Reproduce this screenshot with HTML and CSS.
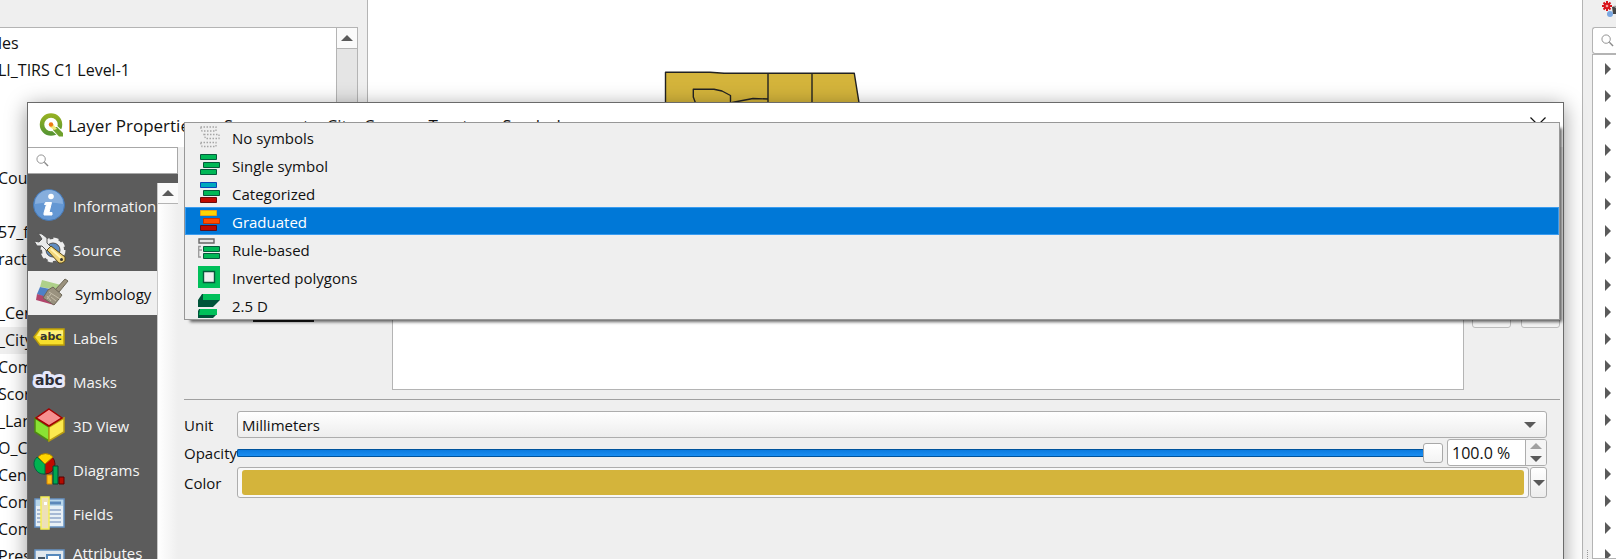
FILE: index.html
```html
<!DOCTYPE html>
<html lang="en">
<head>
<meta charset="utf-8">
<title>Layer Properties</title>
<link rel="stylesheet" href="styles.css">
</head>
<body>
<div class="app">
  <aside class="browser-dock" aria-label="Browser">
    <div class="tree">
      <ul class="tree-rows">
        <li>les</li><li>LI_TIRS C1 Level-1</li><li></li><li></li><li></li><li>Coun</li><li></li><li>57_f</li><li>ract</li><li></li><li>_Cen</li><li class="current">_City</li><li>Com</li><li>Scor</li><li>_Lan</li><li>O_C</li><li>Cens</li><li>Com</li><li>Com</li><li>Pres</li>
      </ul>
      <div class="scroll"><button class="scroll-up" aria-label="Scroll up"><span class="tri up"></span></button></div>
    </div>
  </aside>

  <main class="canvas">
    <svg class="map" width="200" height="40" viewBox="664 70 200 40">
      <g stroke="#222" stroke-width="1.4" stroke-linejoin="round">
        <path fill="#d4b43b" d="M665.500 112V72.300H710L724 73.300H854.300L860.500 112Z"/>
        <path fill="none" d="M768 73.300V112M812 73.300V112M695.500 103L693.300 97V89.300H714L722 91L730.500 95.500V103M732 102.500L753 98.500L768 99"/>
      </g>
    </svg>
  </main>

  <div class="splitter"><span class="grip"></span></div>

  <aside class="tool-dock" aria-label="Processing toolbox">
    <div class="dock-tools">
      <svg width="20" height="18" viewBox="0 0 20 18">
        <path d="M11 7L20 4V14H12Z" fill="#444"/><path d="M13 6L20 11" stroke="#aaa" stroke-width="1.500"/>
        <circle cx="9" cy="14" r="3" fill="#7aa7e0"/>
        <g stroke="#d8141b" stroke-width="2"><path d="M6 1V11M1 6H11M2.500 2.500L9.500 9.500M9.500 2.500L2.500 9.500"/></g>
        <circle cx="6" cy="6" r="3.300" fill="#d8141b"/><circle cx="6" cy="6" r="1.300" fill="#f6a3a3"/>
      </svg>
    </div>
    <label class="dock-search">
      <svg width="13" height="13" viewBox="0 0 14 14"><circle cx="5.500" cy="5.500" r="4.500" fill="none" stroke="#8a8a8a"/><path d="M9 9L13 13" stroke="#8a8a8a" stroke-width="1.500"/></svg>
      <input type="text" aria-label="Search toolbox">
    </label>
    <ul class="tool-tree">
      <li><span class="tri right"></span></li><li><span class="tri right"></span></li><li><span class="tri right"></span></li><li><span class="tri right"></span></li><li><span class="tri right"></span></li><li><span class="tri right"></span></li><li><span class="tri right"></span></li><li><span class="tri right"></span></li><li><span class="tri right"></span></li><li><span class="tri right"></span></li><li><span class="tri right"></span></li><li><span class="tri right"></span></li><li><span class="tri right"></span></li><li><span class="tri right"></span></li><li><span class="tri right"></span></li><li><span class="tri right"></span></li><li><span class="tri right"></span></li><li><span class="tri right"></span></li><li><span class="tri right"></span></li>
    </ul>
  </aside>

  <section class="dialog" role="dialog" aria-labelledby="dlg-title">
    <header class="titlebar">
      <svg class="logo" width="24" height="24" viewBox="0 0 24 24">
        <defs><linearGradient id="q" x1="0" y1="0" x2="0" y2="1"><stop offset="0" stop-color="#93b023"/><stop offset="1" stop-color="#589632"/></linearGradient></defs>
        <circle cx="12" cy="11.500" r="9" fill="none" stroke="url(#q)" stroke-width="4.500"/>
        <path d="M12 13L16 11L24 18V24H20L12 17Z" fill="#fff"/>
        <path d="M15 14H18L24 20V23.500H20L14 17Z" fill="#6fa02c"/>
        <path d="M11 11L14 11L18 16L15 17L11 14Z" fill="#f4ea7a"/><circle cx="12" cy="11.500" r="2.200" fill="#ee7913"/>
      </svg>
      <h1 id="dlg-title">Layer Properties — Sacramento_City_Census_Tracts — Symbology</h1>
      <button class="close" aria-label="Close"><svg width="16" height="16" viewBox="0 0 16 16"><path d="M.5.500L15.500 15.500M15.500.500L.5 15.500" stroke="#111" stroke-width="1.200"/></svg></button>
    </header>

    <div class="dialog-body">
      <div class="side">
        <label class="side-search">
          <svg width="13" height="13" viewBox="0 0 14 14"><circle cx="5.500" cy="5.500" r="4.500" fill="none" stroke="#8a8a8a"/><path d="M9 9L13 13" stroke="#8a8a8a" stroke-width="1.500"/></svg>
          <input type="text" aria-label="Search options">
        </label>
        <div class="side-main">
          <nav class="pages">
            <a href="#information">
              <svg width="34" height="34" viewBox="0 0 34 34"><circle cx="16" cy="17" r="15.500" fill="#6497d3" stroke="#4678b4"/><path d="M2 16A14 14 0 0 1 30 16Q16 13 2 16Z" fill="#86aedd"/><circle cx="18" cy="8.500" r="2.800" fill="#fff"/><path d="M12.500 14.500H18.500L16 24.500H19V27H11V25L13.500 16.500H11.500Z" fill="#fff" stroke="#fff"/></svg>
              <span>Information</span></a>
            <a href="#source">
              <svg width="34" height="34" viewBox="0 0 34 34"><circle cx="20" cy="18" r="9" fill="none" stroke="#eee" stroke-width="4"/><circle cx="20" cy="18" r="11" fill="none" stroke="#eee" stroke-width="3" stroke-dasharray="5 3.640"/><circle cx="20" cy="18" r="7" fill="#5f8cc0" stroke="#555"/><path d="M5 1L9 2L14 6V11L18 15L14 19L9 14H4L1 9L6 10L9 7Z" fill="#e9eaea" stroke="#555"/><path d="M14 18L18 14L32 25V29L29 31H26Z" fill="#f2d67a" stroke="#5b4a18"/><path d="M18 17L28 26" stroke="#fff3b5" stroke-width="2"/><circle cx="28.500" cy="27.500" r="1.500" fill="#333"/></svg>
              <span>Source</span></a>
            <a href="#symbology" class="active" aria-current="page">
              <svg width="36" height="34" viewBox="0 0 36 34"><path d="M9 4L28 9L25 14L7 11Z" fill="#aed08a"/><path d="M7 11L17 13L14 22L4 18Z" fill="#4f80c5"/><path d="M4 18L14 21L21 29L3 24Z" fill="#b2456c"/><path d="M22 14L32 3L35 5L26 16Z" fill="#9b927d" stroke="#6d6757"/><path d="M15 14L20 11L29 19L26 23L21 29L10 22Z" fill="#9a927f" stroke="#6d6757"/><path d="M16 16L27 23M14 20L18 25M18 21L23 25M14 23L18 18" stroke="#c5bda9"/></svg>
              <span>Symbology</span></a>
            <a href="#labels">
              <svg width="34" height="34" viewBox="0 0 34 34"><path d="M1 17L7 9H31V25H7Z" fill="#f7e02c" stroke="#bfa009" stroke-width="1.500"/><path d="M7 10.500H30V16H4Z" fill="#fff07a"/><text x="7" y="20" class="abc-small">abc</text></svg>
              <span>Labels</span></a>
            <a href="#masks">
              <svg width="34" height="34" viewBox="0 0 34 34"><text x="2" y="21" class="abc-halo">abc</text></svg>
              <span>Masks</span></a>
            <a href="#view3d">
              <svg width="34" height="34" viewBox="0 0 34 34"><path d="M2 10L16 19V33L2 24Z" fill="#8ae234" stroke="#4e8a12" stroke-width="1.500"/><path d="M31 10L16 19V33L31 24Z" fill="#fce94f" stroke="#b79a12" stroke-width="1.500"/><path d="M16 1L29 10L16 18L3 10Z" fill="#f78f8f" stroke="#a40000" stroke-width="1.500"/></svg>
              <span>3D View</span></a>
            <a href="#diagrams">
              <svg width="34" height="34" viewBox="0 0 34 34"><circle cx="12" cy="12" r="10" fill="#c00a00" stroke="#5b1010"/><path d="M12 12L4 5A10 10 0 0 0 12 22Z" fill="#00b350" stroke="#064"/><path d="M12 12L5 5A10 10 0 0 1 20 5Z" fill="#ffd500" stroke="#a68000"/><path d="M14 23H19V32H14Z" fill="#ffc21c" stroke="#d98500"/><path d="M20 14H25V32H20Z" fill="#00a650" stroke="#043"/><path d="M26 25H31V32H26Z" fill="#b50b00" stroke="#5b0000"/></svg>
              <span>Diagrams</span></a>
            <a href="#fields">
              <svg width="34" height="34" viewBox="0 0 34 34"><path d="M2 3H31V31H2Z" fill="#e8f0f6" stroke="#6592c4" stroke-width="1.500"/><path d="M3 4H30V10H3Z" fill="#b8d6ea"/><path d="M17 7H28" stroke="#5c88ba" stroke-width="3"/><path d="M4 14H28M4 18H28M4 22H28M4 26H28" stroke="#6582b4"/><path d="M8 1H16V33H8Z" fill="#ede0b8" stroke="#f5ee54" stroke-width="1.500"/><path d="M11 6H14V9H11Z" fill="#fff"/></svg>
              <span>Fields</span></a>
            <a href="#form" class="two-line">
              <svg width="34" height="34" viewBox="0 0 34 34"><path d="M2 3H31V31H2Z" fill="#e1e8ee" stroke="#6592c4" stroke-width="1.500"/><path d="M5 10H12V13H5Z" fill="#456"/><path d="M14 8H27V18H14Z" fill="#fff" stroke="#5689bd" stroke-width="2"/></svg>
              <span>Attributes Form</span></a>
          </nav>
          <div class="side-scroll"><button class="scroll-up" aria-label="Scroll pages up"><span class="tri up"></span></button></div>
        </div>
      </div>

      <div class="content">
        <div class="symbol-area">
          <div class="preview-cell"><div class="preview"></div></div>
          <div class="symbol-list"></div>
          <div class="symbol-buttons"><button aria-label="Add symbol layer"></button><button aria-label="Remove symbol layer"></button></div>
        </div>
        <form class="form">
          <label for="unit">Unit</label>
          <div class="select-wrap"><select id="unit"><option>Millimeters</option></select><span class="tri down"></span></div>
          <label for="opacity">Opacity</label>
          <div class="opacity-row">
            <input id="opacity" type="range" min="0" max="100" value="100">
            <div class="spin"><input type="text" value="100.0 %" aria-label="Opacity value"><div class="steps"><button type="button" aria-label="Increase" disabled><span class="tri up"></span></button><button type="button" aria-label="Decrease"><span class="tri down"></span></button></div></div>
          </div>
          <label for="color">Color</label>
          <div class="color-row"><button type="button" id="color" class="color"><span></span></button><button type="button" class="color-menu" aria-label="Color menu"><span class="tri down"></span></button></div>
        </form>
      </div>
    </div>

    <ul class="menu" role="listbox" aria-label="Renderer">
      <li role="option"><svg width="22" height="22" viewBox="0 0 22 22"><g fill="none" stroke="#a5a5a5" stroke-width="1.300" stroke-dasharray="1.500 1.500"><path d="M2.500 1H18V5H4ZM6 8.500H21V12.500H7.500ZM2.500 16.500H18V20.500H4Z"/></g></svg>No symbols</li>
      <li role="option"><svg width="22" height="22" viewBox="0 0 22 22"><g fill="#00b856" stroke="#065a3b"><path d="M2.500.500H18.500V5.500H2.500ZM5.500 8.500H21.500V13.500H5.500ZM2.500 15.500H18.500V20.500H2.500Z"/></g></svg>Single symbol</li>
      <li role="option"><svg width="22" height="22" viewBox="0 0 22 22"><path d="M2.500.500H18.500V5.500H2.500Z" fill="#00a9bd" stroke="#0b46b8"/><path d="M5.500 8.500H21.500V13.500H5.500Z" fill="#00b856" stroke="#065a3b"/><path d="M2.500 15.500H18.500V20.500H2.500Z" fill="#c00a00" stroke="#6b0d0d"/></svg>Categorized</li>
      <li role="option" aria-selected="true" class="selected"><svg width="22" height="22" viewBox="0 0 22 22"><path d="M2.500.500H18.500V5.500H2.500Z" fill="#ffd500" stroke="#e8a21a"/><path d="M5.500 8.500H21.500V13.500H5.500Z" fill="#ff4e00" stroke="#c83200"/><path d="M2.500 15.500H18.500V20.500H2.500Z" fill="#c00a00" stroke="#5c0d1c"/></svg>Graduated</li>
      <li role="option"><svg width="22" height="22" viewBox="0 0 22 22"><path d="M1 1H16V5H1Z" fill="#e6e6e6" stroke="#666" stroke-width="1.400"/><path d="M3 8.500H.7V19H3M1 12H4" fill="none" stroke="#999" stroke-width="1.300"/><path d="M5.500 8.500H21.500V13.500H5.500ZM5.500 15.500H21.500V20.500H5.500Z" fill="#00b856" stroke="#065a3b"/></svg>Rule-based</li>
      <li role="option"><svg width="22" height="22" viewBox="0 0 22 22"><path d="M0 0H22V22H0Z" fill="#00c05a"/><path d="M5.500 5.500H16.500V16.500H5.500Z" fill="#efefef" stroke="#065a3b" stroke-width="1.400"/></svg>Inverted polygons</li>
      <li role="option"><svg width="22" height="24" viewBox="0 0 22 24"><path d="M4 0L0 6V13H15L22 6V0Z" fill="#00543a"/><path d="M5 0H22V6H5Z" fill="#00c05a"/><path d="M1 15L0 17V24H15L19 20V15Z" fill="#00543a"/><path d="M2 15H19V21H1Z" fill="#00c05a"/></svg>2.5 D</li>
    </ul>
  </section>
</div>
</body>
</html>
```
FILE: styles.css
```css
* { box-sizing: border-box; }
body {
  margin: 0;
  font-family: "Open Sans", "Noto Sans", sans-serif;
  font-size: 15px;
  color: #111;
}
ul { list-style: none; margin: 0; padding: 0; }
button { padding: 0; border: 0; background: none; font: inherit; }
input, select { font: inherit; color: inherit; }
svg { display: block; flex: none; }

.app {
  position: relative;
  display: flex;
  height: 100vh;
  overflow: hidden;
  background: #efefef;
}

/* small arrow glyphs */
.tri { display: block; width: 0; height: 0; border: 6px solid transparent; }
.tri.up { border-bottom-color: #5a5a5a; border-top-width: 0; }
.tri.down { border-top-color: #5a5a5a; border-bottom-width: 0; }
.tri.right { border-left-color: #5a5a5a; border-right-width: 0; }

/* left dock */
.browser-dock {
  flex: 0 0 368px;
  padding: 27px 9px 0 0;
  border-right: 1px solid #b4b4b4;
}
.tree {
  display: flex;
  height: 100%;
  border: 1px solid #b4b4b4;
  border-width: 1px 1px 0 0;
  background: #fff;
  overflow: hidden;
}
.tree-rows { flex: 1; padding-top: 2px; font-size: 16px; }
.tree-rows li { height: 27px; line-height: 27px; text-indent: -2px; white-space: nowrap; }
.tree-rows .current { background: #efefef; }
.scroll { flex: 0 0 21px; border-left: 1px solid #b4b4b4; background: #e5e5e5; }
.scroll-up {
  display: flex;
  align-items: center;
  justify-content: center;
  width: 100%;
  height: 21px;
  border-bottom: 1px solid #b4b4b4;
  background: #fafafa;
}

/* map */
.canvas { position: relative; flex: 1; background: #fff; overflow: hidden; }
.map { position: absolute; left: 296px; top: 70px; }

.splitter {
  display: flex;
  flex: 0 0 10px;
  align-items: flex-end;
  justify-content: center;
  border-left: 1px solid #b4b4b4;
}
.grip { display: block; width: 1px; height: 9px; border-left: 1px dotted #999; }

/* right dock */
.tool-dock { display: flex; flex-direction: column; flex: 0 0 24px; overflow: hidden; }
.dock-tools { flex: 0 0 27px; padding-left: 9px; }
.dock-search {
  display: flex;
  align-items: center;
  flex: 0 0 27px;
  padding-left: 8px;
  border: 1px solid #b4b4b4;
  border-right: 0;
  border-radius: 3px 0 0 3px;
  background: #fff;
}
.dock-search input { width: 0; flex: 1; border: 0; padding: 0; }
.tool-tree { flex: 1; border: 1px solid #b4b4b4; border-right: 0; background: #fff; overflow: hidden; }
.tool-tree li { display: flex; align-items: center; height: 27px; padding-left: 12px; }

/* dialog window */
.dialog {
  position: absolute;
  left: 27px;
  right: 52px;
  top: 102px;
  bottom: -20px;
  display: flex;
  flex-direction: column;
  border: 1px solid #6a6a6a;
  background: #efefef;
  box-shadow: 0 4px 20px rgba(0, 0, 0, .4);
}
.titlebar {
  display: flex;
  align-items: center;
  flex: 0 0 44px;
  padding: 0 17px 0 11px;
  background: #fff;
}
.titlebar h1 { flex: 1; margin: 0 0 0 5px; font-size: 17px; font-weight: 400; white-space: nowrap; }
.dialog-body { display: flex; flex: 1; min-height: 0; }

.side { display: flex; flex-direction: column; flex: 0 0 150px; min-width: 0; background: #5c5c5c; }
.side-search {
  display: flex;
  align-items: center;
  flex: 0 0 27px;
  padding-left: 8px;
  border: 1px solid #a8a8a8;
  border-left: 0;
  background: #fff;
}
.side-search input { flex: 1; min-width: 0; border: 0; padding: 0; background: none; }
.side-main { display: flex; flex: 1; min-height: 0; padding-top: 9px; }
.pages { flex: 1; min-width: 0; overflow: hidden; }
.pages a {
  display: flex;
  align-items: center;
  gap: 6px;
  height: 44px;
  padding-left: 5px;
  overflow: hidden;
  color: #f5f5f5;
  font-size: 15px;
  line-height: 24px;
  text-decoration: none;
}
.pages span { padding-top: 2px; }
.pages .active { background: #efefef; color: #111; }
.pages .two-line { height: 58px; }
.abc-small { font: bold 11px "DejaVu Sans", sans-serif; fill: #333; }
.abc-halo {
  font: bold 14px "DejaVu Sans", sans-serif;
  fill: #2c2c34;
  stroke: #e6e8fb;
  stroke-width: 6px;
  stroke-linejoin: round;
  paint-order: stroke;
}
.pages svg { overflow: visible; }
.side-scroll {
  flex: 0 0 21px;
  border-left: 1px solid #c8c8c8;
  background: linear-gradient(90deg, #fff, #efefef);
}

/* symbol settings */
.content { flex: 1; min-width: 0; padding: 0 3px 0 6px; }
.symbol-area {
  display: flex;
  height: 253px;
  padding-bottom: 9px;
  border-bottom: 1px solid #a0a0a0;
}
.preview-cell { flex: 0 0 208px; padding: 20px 0 0 69px; }
.preview { width: 61px; height: 155px; background: #1a1a1a; }
.symbol-list { flex: 1; border: 1px solid #b4b4b4; background: #fff; }
.symbol-buttons { display: flex; gap: 10px; padding: 142px 0 0 8px; }
.symbol-buttons button { width: 39px; height: 39px; border: 1px solid #bcbcbc; border-radius: 3px; background: #f2f2f2; }

.form {
  display: grid;
  grid-template-columns: 53px 1fr;
  grid-template-rows: 27px 27px 31px;
  row-gap: 1px;
  align-items: center;
  padding: 11px 13px 0 0;
}
.form label { white-space: nowrap; }
.select-wrap { display: grid; align-items: center; height: 27px; }
.select-wrap > * { grid-area: 1 / 1; }
.select-wrap .tri { justify-self: end; margin-right: 11px; pointer-events: none; }
select {
  appearance: none;
  width: 100%;
  height: 27px;
  padding: 0 4px;
  border: 1px solid #adadad;
  border-radius: 3px;
  background: linear-gradient(#fff, #ededed);
}
.opacity-row { display: flex; align-items: center; gap: 4px; height: 27px; }
input[type="range"] { appearance: none; flex: 1; min-width: 0; height: 22px; margin: 0; background: none; }
input[type="range"]::-webkit-slider-runnable-track {
  height: 8px;
  border-radius: 2px;
  background: linear-gradient(#0a78dc, #1d91f5);
  box-shadow: inset 0 0 0 1px #00539c;
}
input[type="range"]::-webkit-slider-thumb {
  appearance: none;
  width: 20px;
  height: 20px;
  margin-top: -6px;
  border: 1px solid #a8a8a8;
  border-radius: 3px;
  background: linear-gradient(#fff, #f3f3f3);
}
.spin {
  display: flex;
  flex: 0 0 100px;
  height: 27px;
  border: 1px solid #adadad;
  border-radius: 3px;
  background: #fff;
  overflow: hidden;
}
.spin input { flex: 1; min-width: 0; border: 0; padding: 0 0 0 4px; font-size: 16px; background: none; }
.steps { display: flex; flex-direction: column; flex: 0 0 21px; border-left: 1px solid #adadad; background: #f5f5f5; }
.steps button { display: flex; flex: 1; align-items: center; justify-content: center; }
.steps button:disabled { opacity: .55; }
.color-row { display: flex; gap: 1px; height: 31px; }
.color { flex: 1; padding: 2px 4px; border: 1px solid #adadad; border-radius: 3px; background: #f8f8f8; }
.color span { display: block; height: 25px; border-radius: 3px; background: #d4b43b; }
.color-menu {
  display: flex;
  flex: 0 0 17px;
  align-items: center;
  justify-content: center;
  border: 1px solid #adadad;
  border-radius: 3px;
  background: linear-gradient(#fff, #ededed);
}

/* open renderer list */
.menu {
  position: absolute;
  left: 156px;
  right: 3px;
  top: 19px;
  border: 1px solid #979797;
  background: #efefef;
  box-shadow: 4px 4px 3px -2px rgba(0, 0, 0, .6);
}
.menu li {
  display: flex;
  gap: 12px;
  height: 28px;
  padding-left: 12px;
  border: 1px solid transparent;
  line-height: 28px;
}
.menu svg { margin-top: 2px; }
.menu .selected { border-color: #3a9cf0; background: #0078d7; color: #fff; }
```
